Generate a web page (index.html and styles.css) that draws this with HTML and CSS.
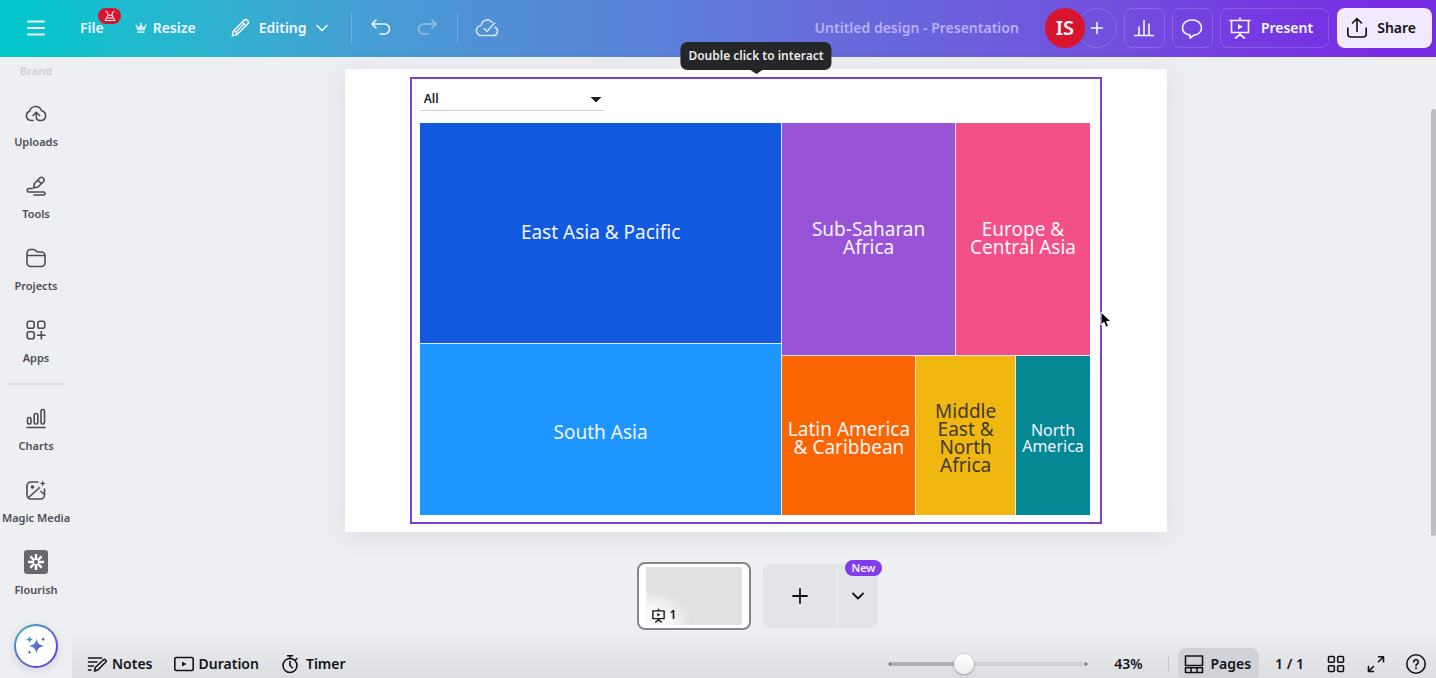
FILE: index.html
```html
<!DOCTYPE html>
<html lang="en">
<head>
<meta charset="utf-8">
<title>Untitled design - Presentation</title>
<link rel="stylesheet" href="styles.css">
</head>
<body>
<header class="topbar">
  <div class="topbar-left">
    <button class="plain menu-btn" aria-label="Main menu"><svg class="icon" width="24" height="24" viewBox="0 0 24 24"><path d="M4 5.500h16M4 12h16M4 18.500h16" stroke-width="1.800"/></svg></button>
    <button class="plain file-btn">File
      <span class="beta"><svg class="icon" width="14" height="12" viewBox="0 0 14 12"><path d="M2.800 1.500l1.700.7.500 3L2 10.500h10L9 5.200l.5-3 1.700-.7M5 5.200h4M3.800 8h6.400" stroke-width="1"/></svg></span>
    </button>
    <button class="plain resize-btn"><svg width="12" height="12" viewBox="0 0 12 12"><path d="M2.200 8.200 1 4a.8.8 0 1 1 .8-.4l2 1.500L5.500 2.300a.9.9 0 1 1 1 0l1.700 2.800 2-1.500A.8.800 0 1 1 11 4L9.800 8.200zM2.400 9.200h7.200v1.200a.6.600 0 0 1-.6.600H3a.6.600 0 0 1-.6-.6z" fill="#d3edf9"/></svg>Resize</button>
    <button class="plain edit-btn"><svg class="icon" width="24" height="24" viewBox="0 0 24 24"><path d="M3.500 20.500l1.300-5.300L16.600 3.400a2.200 2.200 0 0 1 3.100 0l.9.900a2.200 2.200 0 0 1 0 3.100L8.800 19.200zM14.600 5.400l4 4M5 15.200c1.800.2 3.500 1.700 3.800 3.800M8.500 15.500l7.500-7.500"/></svg>Editing<svg class="icon" width="14" height="14" viewBox="0 0 14 14"><path d="M2 4.500l5 5 5-5"/></svg></button>
    <span class="rule"></span>
    <button class="plain icon-btn" aria-label="Undo"><svg class="icon" width="24" height="24" viewBox="0 0 24 24"><path d="M7 4L3 8l4 4M3.500 8H15.500a5 5 0 0 1 0 10H11"/></svg></button>
    <button class="plain icon-btn faded" aria-label="Redo"><svg class="icon" width="24" height="24" viewBox="0 0 24 24"><path d="M17 4l4 4-4 4M20.500 8H8.500a5 5 0 0 0 0 10H13"/></svg></button>
    <span class="rule"></span>
    <button class="plain icon-btn saved" aria-label="All changes saved"><svg class="icon" width="24" height="24" viewBox="0 0 24 24"><path d="M9 12.500l3 3 7.500-8.500M17 6.200A6 6 0 0 0 6.300 9.500 5 5 0 0 0 6.500 19.500H18a4.300 4.300 0 0 0 2-8.200"/></svg></button>
  </div>
  <div class="topbar-right">
    <span class="doc-title">Untitled design - Presentation</span>
    <div class="people">
      <span class="avatar">IS</span>
      <button class="outline add-person" aria-label="Add people"><svg class="icon" width="16" height="16" viewBox="0 0 16 16"><path d="M8 2.500v11M2.500 8h11"/></svg></button>
    </div>
    <button class="outline square" aria-label="Insights"><svg class="icon" width="24" height="24" viewBox="0 0 24 24"><path d="M2.500 19.500h19M7 19V11M12 19V4.500M17 19V8"/></svg></button>
    <button class="outline square" aria-label="Comments"><svg class="icon" width="24" height="24" viewBox="0 0 24 24"><path d="M14 19.200C18.500 18.800 21.500 15.700 21.500 11.500 21.500 7 17.500 4 12 4S2.500 7 2.500 11.500c0 4 2.700 6.800 7.500 7.600V22z"/></svg></button>
    <button class="outline present"><svg class="icon" width="24" height="24" viewBox="0 0 24 24"><path d="M3.500 4.500h17v12h-17zM2 4.500h20M12 2v2.500M12 17v2M7.500 22l4.500-3.500 4.500 3.500"/><path d="M10 8l5 2.700-5 2.700z" fill="currentColor" stroke="none"/></svg>Present</button>
    <button class="share"><svg class="icon" width="24" height="24" viewBox="0 0 24 24"><path d="M12 15.500V3M7.500 7L12 2.500 16.500 7M2.800 12v6a3 3 0 0 0 3 3h12.400a3 3 0 0 0 3-3v-6"/></svg>Share</button>
  </div>
</header>

<main class="editor">
  <nav class="sidebar" aria-label="Tools">
    <a class="brand" href="#">Brand</a>
    <a class="tool" href="#"><svg class="icon" width="24" height="24" viewBox="0 0 24 24"><path d="M9 18.500H7A4.800 4.800 0 0 1 5.600 9.200 6.300 6.300 0 0 1 17.600 8.700 5 5 0 0 1 17.500 18.500h-1.200c-2.500 0-4-1.300-4-3.500V10.500M9 13.500l3.300-3.300 3.300 3.300"/></svg>Uploads</a>
    <a class="tool" href="#"><svg class="icon" width="24" height="24" viewBox="0 0 24 24"><path d="M9.500 14l1-4.500L15.800 4a2.200 2.200 0 0 1 3.200 0l.5.500a2.200 2.200 0 0 1 0 3L14 13zM13.800 6.200l3.600 3.600M8 14.500H5a1.700 1.700 0 0 0 0 3.500h14.500a1.500 1.500 0 0 1 0 3H10"/></svg>Tools</a>
    <a class="tool" href="#"><svg class="icon" width="24" height="24" viewBox="0 0 24 24"><path d="M3 9.500h18M3 7a3.500 3.500 0 0 1 3.500-3.500h3c1.500 0 2 .5 2.600 1.500.4.700 1 1 2 1h3.400A3.500 3.500 0 0 1 21 9.500V17a3.500 3.500 0 0 1-3.500 3.500h-11A3.500 3.500 0 0 1 3 17z"/></svg>Projects</a>
    <a class="tool" href="#"><svg class="icon" width="24" height="24" viewBox="0 0 24 24"><rect x="3.200" y="3.200" width="7" height="7" rx="2"/><rect x="13.800" y="3.200" width="7" height="7" rx="2"/><rect x="3.200" y="13.800" width="7" height="7" rx="2"/><path d="M17.300 13.500v7.500M13.500 17.300H21"/></svg>Apps</a>
    <hr class="divider">
    <a class="tool" href="#"><svg class="icon" width="24" height="24" viewBox="0 0 24 24"><path d="M3 21.500h18"/><rect x="3.500" y="11.500" width="3.500" height="6.500" rx="1.500"/><rect x="10.200" y="7.500" width="3.600" height="10.500" rx="1.500"/><rect x="17" y="3.500" width="3.500" height="14.500" rx="1.500"/></svg>Charts</a>
    <a class="tool" href="#"><svg class="icon" width="24" height="24" viewBox="0 0 24 24"><path d="M14 4H7a4 4 0 0 0-4 4v9a4 4 0 0 0 4 4h9.500a4 4 0 0 0 4-4v-6M4.500 19.500L14 11M17 13.500l3.500 3"/><circle cx="8.500" cy="9" r="1.800" fill="currentColor" stroke="none"/><path d="M18.700 2l.8 2.700 2.500.8-2.500.8-.8 2.700-.8-2.700-2.500-.8 2.500-.8zM15 8l.5 1.500 1.500.5-1.500.5L15 12l-.5-1.500L13 10l1.500-.5z" fill="currentColor" stroke="none"/></svg>Magic Media</a>
    <a class="tool" href="#"><svg width="24" height="24" viewBox="0 0 24 24"><rect width="24" height="24" rx="3" fill="#68686d"/><path d="M12 4v6M12 14v6M4 12h6M14 12h6M6.300 6.300l4.200 4.200M13.500 13.500l4.200 4.200M17.700 6.300l-4.200 4.200M10.500 13.500l-4.200 4.200" stroke="#fff" stroke-width="2.400"/></svg>Flourish</a>
    <button class="assistant" aria-label="Assistant"><svg width="24" height="24" viewBox="0 0 24 24"><defs><linearGradient id="spark" x1="0" y1="0" x2="1" y2="1"><stop offset="0" stop-color="#3fa3cb"/><stop offset=".5" stop-color="#5870cc"/><stop offset="1" stop-color="#6a3fd6"/></linearGradient></defs><path fill="url(#spark)" d="M12.500 4.500c1 5 2.500 6.500 7.500 7.500-5 1-6.500 2.500-7.500 7.500-1-5-2.500-6.500-7.500-7.500 5-1 6.500-2.500 7.500-7.500zM5.500 2c.5 2.300 1.200 3 3.500 3.500C6.700 6 6 6.700 5.500 9 5 6.700 4.300 6 2 5.500 4.300 5 5 4.300 5.500 2zM19.200 2.800c.4 1.700.8 2.100 2.500 2.500-1.700.4-2.100.8-2.500 2.500-.4-1.700-.8-2.100-2.500-2.500 1.700-.4 2.100-.8 2.500-2.500zM5.500 16c.4 1.500.7 1.800 2.200 2.200-1.500.4-1.800.7-2.200 2.200-.4-1.500-.7-1.800-2.200-2.200 1.500-.4 1.800-.7 2.200-2.200z"/></svg></button>
  </nav>

  <section class="workspace">
    <div class="page">
      <div class="embed">
        <span class="tooltip" role="tooltip">Double click to interact</span>
        <select class="region-filter" aria-label="Region"><option>All</option></select>
        <div class="treemap">
          <div class="half left">
            <div class="cell east-asia">East Asia &amp; Pacific</div>
            <div class="cell south-asia">South Asia</div>
          </div>
          <div class="half right">
            <div class="row top">
              <div class="cell africa">Sub-Saharan<br>Africa</div>
              <div class="cell europe">Europe &amp;<br>Central Asia</div>
            </div>
            <div class="row bottom">
              <div class="cell latin">Latin America<br>&amp; Caribbean</div>
              <div class="cell mideast">Middle<br>East &amp;<br>North<br>Africa</div>
              <div class="cell north-america">North<br>America</div>
            </div>
          </div>
        </div>
        <svg class="pointer" width="12" height="18" viewBox="0 0 12 18"><path d="M1 1v13l3-2.800 2 5 2.500-1-2-4.800H11z" fill="#000" stroke="#fff"/></svg>
      </div>
    </div>

    <div class="strip">
      <button class="thumb" aria-label="Page 1"><span class="thumb-view"><span class="thumb-label"><svg class="icon" width="15" height="15" viewBox="0 0 24 24"><path d="M3 4.500h18v12.500H3zM12 2v2.500M12 17v2M7.500 22.500l4.500-3.500 4.500 3.500" stroke-width="2.200"/><path d="M10 8l5 2.700-5 2.700z" fill="currentColor" stroke="none"/></svg>1</span></span></button>
      <div class="add-group">
        <button class="add-page" aria-label="Add page"><svg class="icon" width="18" height="18" viewBox="0 0 18 18"><path d="M9 2v14M2 9h14" stroke-width="1.800"/></svg></button>
        <button class="add-more" aria-label="More page types"><svg class="icon" width="14" height="14" viewBox="0 0 14 14"><path d="M2 4.500l5 5 5-5" stroke-width="1.800"/></svg></button>
        <span class="new-badge">New</span>
      </div>
    </div>

    <footer class="bottombar">
      <div class="bottom-left">
        <button class="foot-btn"><svg class="icon" width="20" height="20" viewBox="0 0 20 20"><path d="M1.500 4h13M1.500 8h8.500M1.500 12h5M1.500 16h2.500M7.500 17l.8-3.500 8-7.500a1.600 1.600 0 0 1 2.300 2.300l-7.800 7.700z"/></svg>Notes</button>
        <button class="foot-btn"><svg class="icon" width="20" height="20" viewBox="0 0 20 20"><rect x=".8" y="3.500" width="18.400" height="13" rx="1.500"/><path d="M8 7.500l4.500 2.500L8 12.500z" fill="currentColor" stroke="none"/></svg>Duration</button>
        <button class="foot-btn timer"><svg class="icon" width="20" height="20" viewBox="0 0 20 20"><circle cx="10" cy="11.500" r="7"/><path d="M7.500 1.800h5M10 2v2.500M10 7.500v4l2.300 2.300M15.200 6.300l1.800-1.800"/></svg>Timer</button>
      </div>
      <div class="bottom-right">
        <input class="zoom" type="range" min="10" max="100" value="43" aria-label="Zoom">
        <span class="percent">43%</span>
        <span class="foot-rule"></span>
        <button class="foot-btn pages"><svg class="icon" width="20" height="20" viewBox="0 0 20 20"><path d="M1.500 2h17v9.500h-17zM1.500 13.800h17v4.700h-17zM7 13.800v4.700M13 13.800v4.700"/></svg>Pages</button>
        <span class="count">1 / 1</span>
        <button class="foot-btn" aria-label="Grid view"><svg class="icon" width="20" height="20" viewBox="0 0 20 20"><rect x="2.500" y="2.500" width="5.800" height="5.800" rx="1"/><rect x="11.700" y="2.500" width="5.800" height="5.800" rx="1"/><rect x="2.500" y="11.700" width="5.800" height="5.800" rx="1"/><rect x="11.700" y="11.700" width="5.800" height="5.800" rx="1"/></svg></button>
        <button class="foot-btn" aria-label="Full screen"><svg class="icon" width="20" height="20" viewBox="0 0 20 20"><path d="M12.500 2.800h5v5M17.500 2.800l-5 5M7.500 17.500h-5v-5M2.500 17.500l5-5"/></svg></button>
        <button class="foot-btn" aria-label="Help"><svg class="icon" width="20" height="20" viewBox="0 0 20 20"><circle cx="10" cy="10" r="9.200"/><path d="M7.700 8a2.300 2.300 0 1 1 3.500 2c-.8.500-1.200.9-1.200 1.800"/><circle cx="10" cy="14.200" r="1" fill="currentColor" stroke="none"/></svg></button>
      </div>
    </footer>
    <span class="scroll-thumb"></span>
  </section>
</main>
</body>
</html>
```
FILE: styles.css
```css
* { box-sizing: border-box; }

body {
  margin: 0;
  min-height: 100vh;
  display: flex;
  flex-direction: column;
  background: #eeeff3;
  color: #121419;
  font: 600 14px/20px "Noto Sans", "Open Sans", sans-serif;
  overflow: hidden;
}

button {
  font: inherit;
  color: inherit;
  border: 0;
  padding: 0;
  background: none;
  display: flex;
  align-items: center;
}

a { color: inherit; text-decoration: none; }

svg { display: block; flex: none; }

.icon {
  fill: none;
  stroke: currentColor;
  stroke-width: 1.6;
  stroke-linecap: round;
  stroke-linejoin: round;
}

/* Top bar */
.topbar {
  display: flex;
  justify-content: space-between;
  align-items: center;
  height: 57px;
  padding: 0 4px 1px 24px;
  color: #f2f8ff;
  background: linear-gradient(90deg, #04c4cc 2%, #1bbccd 8%, #2fb2cf 15%, #43a0d3 24%, #5190d6 34%, #5a82d8 45%, #656edb 56%, #6c5fdc 68%, #7150dd 77%, #753be1 87%, #782ce3 96%);
}

.topbar-left, .topbar-right { display: flex; align-items: center; }
.topbar-right { gap: 7px; }

.menu-btn { margin-right: 32px; }
.file-btn { position: relative; margin-right: 31px; }
.beta {
  position: absolute;
  left: 18px;
  top: -10px;
  width: 23px;
  height: 16px;
  border-radius: 8px;
  background: #d9142f;
  display: flex;
  align-items: center;
  justify-content: center;
}
.resize-btn { gap: 6px; margin-right: 33px; }
.edit-btn { gap: 8px; }
.edit-btn svg:first-child { width: 22px; }
.rule { width: 1px; height: 32px; background: rgba(255, 255, 255, .18); margin: 0 17px 0 22px; }
.icon-btn { margin-right: 22px; }
.faded { opacity: .45; margin-right: -4px; }
.saved { opacity: .8; margin: 0; }

.doc-title { color: #b9b0f3; margin-right: 19px; }
.people { display: flex; align-items: center; }
.avatar {
  z-index: 1;
  width: 40px;
  height: 40px;
  border-radius: 50%;
  background: #d9142f;
  font-size: 20px;
  line-height: 40px;
  text-align: center;
}
.outline {
  height: 40px;
  border: 1px solid rgba(190, 170, 255, .3);
  border-radius: 8px;
  justify-content: center;
}
.square { width: 41px; }
.add-person { width: 40px; border-radius: 50%; margin-left: -8px; }
.present { padding: 0 15px 0 7px; gap: 9px; }
.share {
  height: 40px;
  padding: 0 16px 0 8px;
  gap: 8px;
  border-radius: 8px;
  background: #f1e9fd;
  color: #111;
  margin-left: 1px;
}

/* Sidebar */
.editor { flex: 1; display: flex; background: linear-gradient(#eeeff3 92%, #dddee2); }

.sidebar {
  width: 72px;
  display: flex;
  flex-direction: column;
  align-items: stretch;
  font-size: 11px;
  line-height: 16px;
  text-align: center;
  white-space: nowrap;
  color: #4c4d53;
  background: #eeeff3;
}
.brand { padding: 6px 0 11px; color: #cfd0d5; }
.tool {
  display: flex;
  flex-direction: column;
  align-items: center;
  gap: 8px;
  padding: 12px 0;
}
.divider { width: 56px; height: 2px; border: 0; margin: 5px 8px 9px; background: #dcdde1; }
.assistant {
  width: 44px;
  height: 44px;
  margin: 14px auto 10px;
  justify-content: center;
  border: 2px solid transparent;
  border-radius: 50%;
  background: linear-gradient(#fff, #fff) padding-box, linear-gradient(135deg, #35b4c8, #5568cc 55%, #6c30d8) border-box;
  box-shadow: 0 2px 8px rgba(60, 60, 90, .15);
}

/* Canvas */
.workspace {
  position: relative;
  flex: 1;
  display: flex;
  flex-direction: column;
  align-items: center;
  padding: 12px 0 0;
}
.page {
  display: flex;
  width: 60.3%;
  aspect-ratio: 822 / 463;
  margin-left: 4px;
  padding: 8px 65px;
  background: #fff;
  box-shadow: 0 4px 24px rgba(50, 60, 80, .09);
}
.embed {
  position: relative;
  flex: 1;
  display: flex;
  flex-direction: column;
  border: 2px solid #7d40d0;
  padding: 9px 10px 7px 8px;
}
.tooltip {
  position: absolute;
  left: 50%;
  bottom: calc(100% + 9px);
  transform: translateX(-50%);
  padding: 4px 8px;
  border-radius: 7px;
  background: #252627;
  color: #eceded;
  font-size: 12px;
  white-space: nowrap;
}
.tooltip::after {
  content: "";
  position: absolute;
  left: 50%;
  top: 100%;
  margin-left: -6px;
  border: 6px solid transparent;
  border-bottom: 0;
  border-top: 4px solid #252627;
}
.region-filter {
  appearance: none;
  width: 184px;
  height: 23px;
  margin-bottom: 12px;
  padding: 0 4px;
  border: 0;
  border-bottom: 1px solid #cfcfcf;
  border-radius: 0;
  background-image: linear-gradient(to bottom left, #222 50%, transparent 51%), linear-gradient(to bottom right, #222 50%, transparent 51%);
  background-position: 171px 9px, 176px 9px;
  background-size: 5px 5px;
  background-repeat: no-repeat;
  background-color: #fff;
  color: #222;
  font: 600 12px/20px "Noto Sans", sans-serif;
}
.treemap {
  flex: 1;
  display: grid;
  grid-template-columns: 362fr 308fr;
  gap: 1px;
  background: #e9e6ea;
  font-weight: 400;
  font-size: 19px;
  line-height: 18px;
  color: #f3f5fb;
}
.half, .row { display: grid; gap: 1px; }
.left { grid-template-rows: 220fr 171fr; }
.right { grid-template-rows: 232fr 159fr; }
.top { grid-template-columns: 173fr 135fr; }
.bottom { grid-template-columns: 134fr 99fr 75fr; }
.cell {
  display: flex;
  align-items: center;
  justify-content: center;
  text-align: center;
  white-space: nowrap;
  min-width: 0;
  padding-bottom: 2px;
}
.east-asia { background: #115ae0; }
.south-asia { background: #1e96ff; padding: 4px 0 0; }
.africa { background: #9853d7; }
.europe { background: #f45088; }
.latin { background: #fa6500; padding: 4px 0 0; }
.mideast { background: #efb70f; color: #3f3a33; padding: 4px 0 0; }
.north-america { background: #048894; font-size: 16px; line-height: 16px; padding: 4px 0 0; }
.pointer { position: absolute; left: 100%; top: 232px; }

/* Page strip */
.strip { display: flex; align-items: center; gap: 12px; padding: 30px 0 18px; margin-left: 6px; }
.thumb {
  width: 114px;
  height: 68px;
  padding: 3px 7px;
  border: 2px solid #84868c;
  border-radius: 8px;
  background: #fff;
}
.thumb-view {
  flex: 1;
  align-self: stretch;
  display: flex;
  align-items: flex-end;
  background: radial-gradient(46px 36px at 0 100%, #f8f8f9 50%, #e0e1e3);
}
.thumb-label { display: flex; align-items: center; gap: 4px; padding-left: 5px; font-size: 12px; }
.add-group { position: relative; display: flex; gap: 1px; }
.add-page, .add-more { height: 64px; justify-content: center; background: #e3e4e8; }
.add-page { width: 74px; border-radius: 8px 0 0 8px; }
.add-more { width: 40px; border-radius: 0 8px 8px 0; }
.new-badge {
  position: absolute;
  right: -4px;
  top: -4px;
  padding: 0 6px;
  border-radius: 8px;
  background: #833be9;
  color: #f6f0ff;
  font-size: 11px;
  line-height: 16px;
}

/* Bottom bar */
.bottombar {
  align-self: stretch;
  margin-top: auto;
  display: flex;
  justify-content: space-between;
  height: 30px;
  padding: 0 10px 0 15px;
}
.bottom-left, .bottom-right { display: flex; align-items: center; height: 32px; }
.bottom-left { gap: 21px; }
.bottom-right { gap: 20px; }
.foot-btn { gap: 6px; }
.bottom-left .foot-btn { gap: 5px; }
.bottom-left .timer { gap: 6px; }
.pages {
  height: 32px;
  margin: 0 -4px 0 -11px;
  padding: 0 8px 0 6px;
  border-radius: 8px;
  background: #d0d2d7;
}
.count { margin-right: 2px; }
.foot-rule { width: 1px; height: 16px; margin-left: 6px; background: #c6c7cc; }
.percent { margin-left: 6px; }
.zoom {
  appearance: none;
  width: 200px;
  height: 20px;
  margin: 0;
  background: radial-gradient(circle at 2px 50%, #777980 1px, transparent 2px), radial-gradient(circle at 198px 50%, #777980 1px, transparent 2px), linear-gradient(90deg, #b0b2b8 38%, #cdd0d4 38%) 1px 8px / 198px 4px no-repeat;
}
.zoom::-webkit-slider-thumb {
  appearance: none;
  width: 20px;
  height: 20px;
  border-radius: 50%;
  background: linear-gradient(#fff, #ededf2);
  box-shadow: 0 0 0 1px rgba(60, 60, 80, .1), 0 2px 3px rgba(40, 40, 60, .2);
}
.scroll-thumb {
  position: absolute;
  right: 0;
  top: 52px;
  width: 5px;
  height: 427px;
  border-radius: 3px;
  background: #bcbec3;
}
```
